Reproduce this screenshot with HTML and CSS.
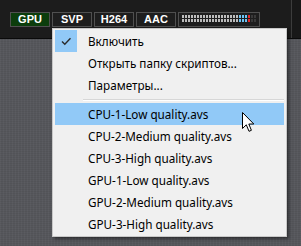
FILE: index.html
```html
<!DOCTYPE html>
<html lang="ru">
<head>
  <meta charset="UTF-8" />
  <title>SVP menu</title>
  <link rel="stylesheet" href="styles.css">
</head>
<body>
  <div class="screen">
    <div class="topbar">
      <div class="badges">
        <span class="badge on">GPU</span>
        <span class="badge">SVP</span>
        <span class="badge">H264</span>
        <span class="badge">AAC</span>
        <div class="badge meter">
          <div class="meterRow">
            <span class="lvl gray"></span><span class="lvl blue"></span><span class="lvl red"></span><span class="lvl off"></span>
          </div>
          <div class="meterRow">
            <span class="lvl gray"></span><span class="lvl blue"></span><span class="lvl red"></span><span class="lvl off"></span>
          </div>
        </div>
      </div>
      <div class="edge"></div>
    </div>
    <div class="desk"></div>

    <!-- context menu -->
    <div class="menu">
      <div class="item">
        <span class="gutter checked">
          <svg width="22" height="22" viewBox="0 0 22 22"><path d="M7 11.5 L9.8 14.2 L15.5 8.3" fill="none" stroke="#2b2b2b" stroke-width="1.4"/></svg>
        </span>
        <span class="label">Включить</span>
      </div>
      <div class="item"><span class="gutter"></span><span class="label">Открыть папку скриптов...</span></div>
      <div class="item"><span class="gutter"></span><span class="label">Параметры...</span></div>
      <div class="sep"></div>
      <div class="item hover"><span class="gutter"></span><span class="label">CPU-1-Low quality.avs</span></div>
      <div class="item"><span class="gutter"></span><span class="label">CPU-2-Medium quality.avs</span></div>
      <div class="item"><span class="gutter"></span><span class="label">CPU-3-High quality.avs</span></div>
      <div class="item"><span class="gutter"></span><span class="label">GPU-1-Low quality.avs</span></div>
      <div class="item"><span class="gutter"></span><span class="label">GPU-2-Medium quality.avs</span></div>
      <div class="item"><span class="gutter"></span><span class="label">GPU-3-High quality.avs</span></div>
    </div>

    <svg class="cursor" width="13" height="21" viewBox="0 0 13 21">
      <path d="M0.5 0.5 L0.5 16.5 L4.3 12.8 L7 19.3 L9.4 18.3 L6.8 12 L11.8 12 Z" fill="#fff" stroke="#000" stroke-width="1" stroke-linejoin="miter"/>
    </svg>
  </div>
</body>
</html>
```

FILE: styles.css
```css
html, body {
  margin: 0;
  padding: 0;
  background: #56575c;
}
.screen {
  position: relative;
  width: 301px;
  height: 246px;
  overflow: hidden;
  display: flex;
  flex-direction: column;
}
.topbar {
  height: 38px;
  background: #1c1c1c;
  border-bottom: 1px solid #0a0a0a;
  display: flex;
  justify-content: space-between;
}
.badges {
  display: flex;
  gap: 2px;
  padding: 12px 0 0 10px;
  align-items: flex-start;
}
.badge {
  box-sizing: border-box;
  width: 40px;
  height: 15px;
  border: 1px solid #505050;
  background: #1e1e1e;
  color: #fff;
  font: bold 11px "Liberation Sans", Arial, sans-serif;
  line-height: 13px;
  text-align: center;
}
.badge.on {
  background: #0c3d0c;
}
.meter {
  width: 82px;
  padding: 2px 0 0 3px;
  display: flex;
  flex-direction: column;
  gap: 1px;
}
.meterRow {
  display: flex;
  height: 3px;
}
.lvl {
  height: 3px;
}
.lvl.gray {
  width: 57px;
  background: repeating-linear-gradient(to right, #bdbdbd 0 2px, transparent 2px 3px);
}
.lvl.blue {
  width: 9px;
  background: repeating-linear-gradient(to right, #6cc4f4 0 2px, transparent 2px 3px);
}
.lvl.red {
  width: 3px;
  background: repeating-linear-gradient(to right, #e8262a 0 2px, transparent 2px 3px);
}
.lvl.off {
  width: 6px;
  background: repeating-linear-gradient(to right, #3a3a3a 0 2px, transparent 2px 3px);
}
.edge {
  width: 9px;
  border-left: 1px solid #3c3c3c;
  background: #181818;
}
.desk {
  flex: 1;
  background:
    repeating-linear-gradient(90deg, rgba(255,255,255,0.03) 0 1px, transparent 1px 3px),
    repeating-linear-gradient(0deg, rgba(0,0,0,0.05) 0 1px, transparent 1px 2px),
    #56575c;
}

/* menu */
.menu {
  position: absolute;
  left: 52px;
  top: 28px;
  width: 235px;
  box-sizing: border-box;
  padding: 1px 2px 1px 2px;
  background: #f0f0f0;
  border: 1px solid #c8c8c8;
  box-shadow: 2px 2px 3px rgba(0, 0, 0, 0.45);
  font-family: "Noto Sans", "Open Sans", sans-serif;
  font-size: 11.7px;
  color: #000;
}
.item {
  display: flex;
  align-items: center;
  height: 22px;
}
.item.hover {
  background: #91c9f7;
}
.gutter {
  width: 22px;
  height: 22px;
  margin-right: 11px;
}
.gutter.checked {
  background: #91c9f7;
}
.gutter svg {
  display: block;
}
.label {
  line-height: 22px;
}
.sep {
  height: 0;
  margin: 3px 0 2px 28px;
  border-top: 1px solid #d7d7d7;
  border-bottom: 1px solid #fff;
}
.cursor {
  position: absolute;
  left: 242px;
  top: 112px;
}
```
